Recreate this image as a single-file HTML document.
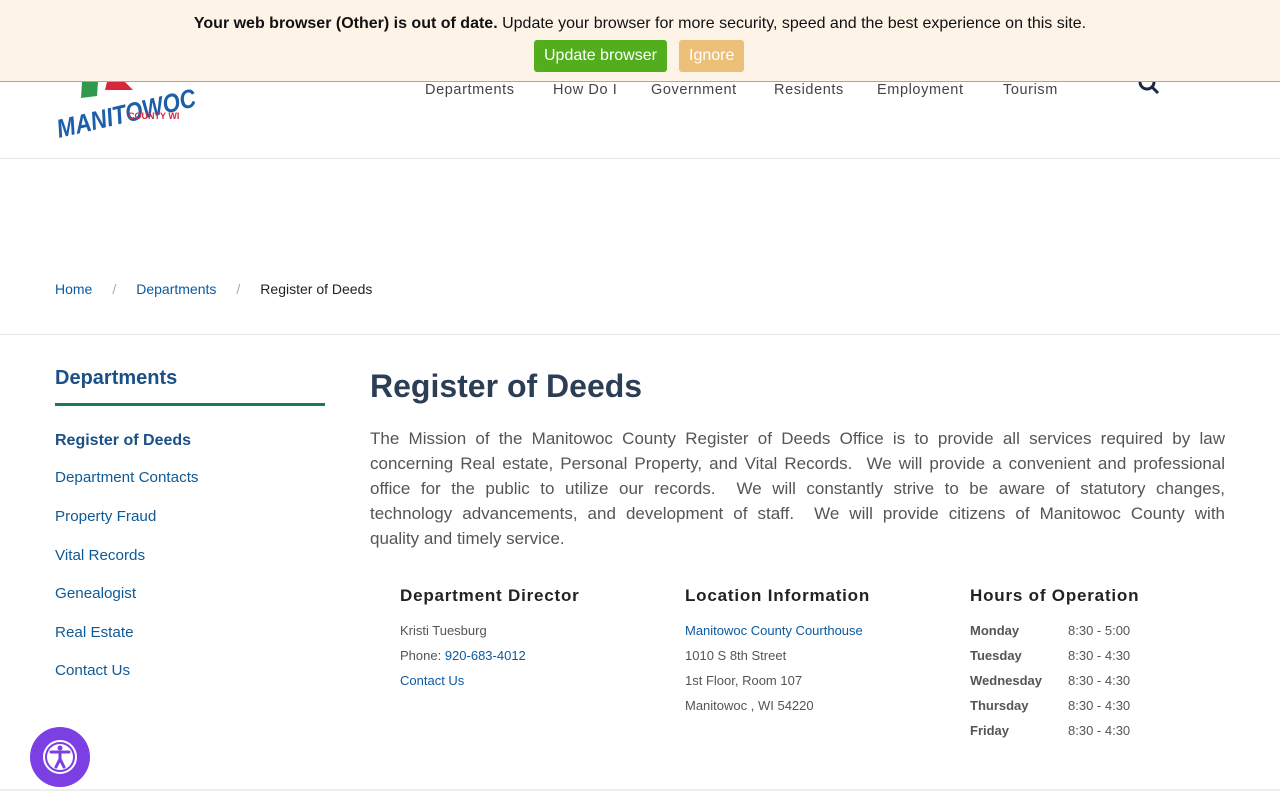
<!DOCTYPE html>
<html><head><meta charset="utf-8"><style>
*{margin:0;padding:0;box-sizing:border-box}
body{width:1280px;height:800px;overflow:hidden;background:#fff;font-family:"Liberation Sans",sans-serif;position:relative}
.bar{position:absolute;top:0;left:0;width:1280px;height:82px;background:#fdf4e7;border-bottom:1px solid #c8a64a;text-align:center;z-index:5}
.bar p{font-size:16px;color:#111;margin-top:15px}
.btn{position:absolute;top:40px;height:32px;line-height:32px;color:#fff;font-size:16px;border-radius:3px;padding:0 10px}
.hdr{position:absolute;top:82px;left:0;width:1280px;height:77px;border-bottom:1px solid #e5e5e5}
.nav{position:absolute;top:82px;font-size:14.5px;color:#444;letter-spacing:.6px}
a,.l{color:#0b5aa0;text-decoration:none}
.side{position:absolute;left:55px;font-size:15.2px;color:#0e5a96}
.h{font-size:13px;color:#555;line-height:25px}
.j{display:block;text-align:justify;text-align-last:justify;white-space:nowrap}
</style></head><body>
<div class="bar"><p><b>Your web browser (Other) is out of date.</b> Update your browser for more security, speed and the best experience on this site.</p>
<div class="btn" style="left:534px;background:#52ae1c">Update browser</div>
<div class="btn" style="left:679px;background:#edc07a">Ignore</div></div>
<div class="hdr"></div>
<svg style="position:absolute;left:55px;top:82px" width="150" height="64">
<polygon points="27,0 43,0 42,14 26,16" fill="#2f9a4b"/><polygon points="52,0 70,0 78,8 50,8" fill="#d5283c"/>
<text x="4" y="56" font-family="Liberation Sans" font-weight="bold" font-style="italic" font-size="26" fill="#1c5ea8" transform="rotate(-13 4 56)" textLength="142" lengthAdjust="spacingAndGlyphs">MANITOWOC</text>
<text x="73" y="37" font-family="Liberation Sans" font-weight="bold" font-size="9" fill="#d5283c">COUNTY WI</text>
</svg>
<div class="nav" style="left:425px">Departments</div><div class="nav" style="left:553px">How Do I</div><div class="nav" style="left:651px">Government</div><div class="nav" style="left:774px">Residents</div><div class="nav" style="left:877px">Employment</div><div class="nav" style="left:1003px">Tourism</div>
<svg style="position:absolute;left:1138px;top:82px" width="24" height="12"><circle cx="9" cy="0" r="7" fill="none" stroke="#1a2a44" stroke-width="3"/><line x1="14" y1="5" x2="20" y2="11" stroke="#1a2a44" stroke-width="3"/></svg>
<div style="position:absolute;top:281px;left:55px;font-size:14px"><span class="l">Home</span><span style="color:#aaa;margin:0 20px">/</span><span class="l">Departments</span><span style="color:#aaa;margin:0 20px">/</span><span style="color:#222">Register of Deeds</span></div>
<div style="position:absolute;top:334px;left:0;width:1280px;border-top:1px solid #e5e5e5"></div>
<div class="side" style="top:367px;font-size:20px;font-weight:bold;color:#1a5085">Departments</div>
<div style="position:absolute;left:55px;top:403px;width:270px;height:3px;background:#1a7a5a"></div>
<div class="side" style="top:432px;font-size:16px;font-weight:bold;color:#1a5085">Register of Deeds</div>
<div class="side" style="top:469px">Department Contacts</div>
<div class="side" style="top:508px">Property Fraud</div>
<div class="side" style="top:547px">Vital Records</div>
<div class="side" style="top:585px">Genealogist</div>
<div class="side" style="top:624px">Real Estate</div>
<div class="side" style="top:662px">Contact Us</div>
<h1 style="position:absolute;left:370px;top:368px;font-size:32px;color:#2c3e55">Register of Deeds</h1>
<div style="position:absolute;left:370px;top:426px;width:855px;font-size:17px;line-height:25px;color:#555">
<span class="j">The Mission of the Manitowoc County Register of Deeds Office is to provide all services required by law</span>
<span class="j">concerning Real estate, Personal Property, and Vital Records.&nbsp; We will provide a convenient and professional</span>
<span class="j">office for the public to utilize our records.&nbsp; We will constantly strive to be aware of statutory changes,</span>
<span class="j">technology advancements, and development of staff.&nbsp; We will provide citizens of Manitowoc County with</span>
<span style="display:block">quality and timely service.</span></div>
<div style="position:absolute;left:400px;top:586px;font-size:17px;font-weight:bold;color:#222;letter-spacing:.8px">Department Director</div>
<div class="h" style="position:absolute;left:400px;top:618px">Kristi Tuesburg<br>Phone: <span class="l">920-683-4012</span><br><span class="l">Contact Us</span></div>
<div style="position:absolute;left:685px;top:586px;font-size:17px;font-weight:bold;color:#222;letter-spacing:.8px">Location Information</div>
<div class="h" style="position:absolute;left:685px;top:618px"><span class="l">Manitowoc County Courthouse</span><br>1010 S 8th Street<br>1st Floor, Room 107<br>Manitowoc , WI 54220</div>
<div style="position:absolute;left:970px;top:586px;font-size:17px;font-weight:bold;color:#222;letter-spacing:.8px">Hours of Operation</div>
<div class="h" style="position:absolute;left:970px;top:618px;font-weight:bold">Monday<br>Tuesday<br>Wednesday<br>Thursday<br>Friday</div>
<div class="h" style="position:absolute;left:1068px;top:618px">8:30 - 5:00<br>8:30 - 4:30<br>8:30 - 4:30<br>8:30 - 4:30<br>8:30 - 4:30</div>
<div style="position:absolute;top:789px;left:0;width:1280px;border-top:2px solid #eee"></div>
<svg style="position:absolute;left:30px;top:727px" width="60" height="60"><circle cx="30" cy="30" r="30" fill="#7b3fe4"/><circle cx="30" cy="30" r="16" fill="none" stroke="#fff" stroke-width="2"/><circle cx="30" cy="30" r="13" fill="#fff"/><circle cx="30" cy="21" r="2.5" fill="#7b3fe4"/><path d="M21 25 L39 25 M30 25 L30 32 M30 32 L26 40 M30 32 L34 40" stroke="#7b3fe4" stroke-width="3" fill="none" stroke-linecap="round"/></svg>
</body></html>
